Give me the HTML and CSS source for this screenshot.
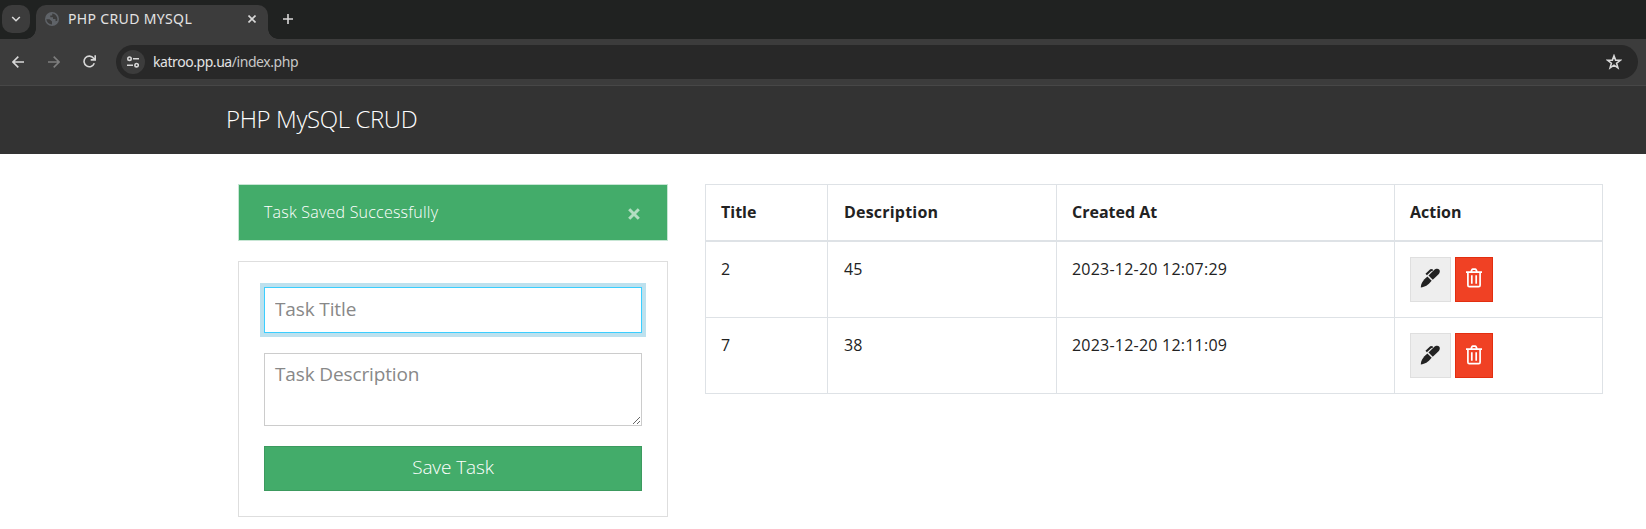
FILE: index.html
```html
<!DOCTYPE html>
<html lang="en">
<head>
<meta charset="utf-8">
<title>PHP CRUD MYSQL</title>
<link rel="stylesheet" href="styles.css">
</head>
<body>
<svg class="defs" width="0" height="0">
  <symbol id="pen" viewBox="0 0 20 20">
    <path d="M.8 19.4C1 15.200 2.700 12.600 7.400 8.500L11.700 12.800C7.800 17.400 5 19.100.8 19.400Z"/>
    <path d="M8.500 7.500 13.800 2.300C16.200.1 18.400.7 19.300 1.700C20.300 3.100 19.800 5 18.300 6.600L12.800 11.800Z"/>
    <path d="M6.200 6.500 10.700 2.200 12.700 2" fill="none" stroke="currentColor" stroke-width="2.100"/>
  </symbol>
  <symbol id="trash" viewBox="0 0 18 20">
    <path d="M1 4.200H17M6 3.900 7 1.700Q7.200 1.200 7.800 1.200H10.200Q10.800 1.200 11 1.700L12 3.900M2.900 4.500V17.200Q2.900 18.700 4.300 18.700H13.700Q15.100 18.700 15.100 17.200V4.500" fill="none" stroke="currentColor" stroke-width="1.700"/>
    <path d="M6.800 7.200V15.800M11.200 7.200V15.800" stroke="currentColor" stroke-width="1.700"/>
  </symbol>
</svg>
<div class="tabstrip">
  <div class="tab-search"><svg width="10" height="6" viewBox="0 0 10 6"><path d="M1.200 1 5 4.700 8.800 1"/></svg></div>
  <div class="tab">
    <svg class="globe" width="14" height="14" viewBox="0 0 14 14"><circle cx="7" cy="7" r="7" fill="#5f6368"/><path d="M1.300 7.200H4.500L7 9.400V12.500C4 12.300 1.700 10.200 1.300 7.200ZM7.200 1.400V3.500H5.300V5.300H8V7H10.500V9.300L12.200 8.800C13 5.300 10.800 1.600 7.200 1.400Z" fill="#3c3c3c"/></svg>
    <span class="tab-title">PHP CRUD MYSQL</span>
    <svg class="tab-close" width="8" height="8" viewBox="0 0 8 8"><path d="M.5.5 7.500 7.500M7.500.5.5 7.500"/></svg>
  </div>
  <svg class="new-tab" width="10" height="10" viewBox="0 0 10 10"><path d="M5 0V10M0 5H10"/></svg>
</div>
<div class="toolbar">
  <svg class="back" width="12" height="12" viewBox="0 0 12 12"><path d="M12 6H1M6.300.6.900 6 6.300 11.400"/></svg>
  <svg class="forward" width="12" height="12" viewBox="0 0 12 12"><path d="M0 6H11M5.700.6 11.100 6 5.700 11.400"/></svg>
  <svg class="reload" width="13" height="13" viewBox="0 0 13 13"><path d="M11.300 8.300A5.300 5.300 0 1 1 10.600 3.200L12 4.700M12.200.3V4.900H7.700"/></svg>
  <div class="omnibox">
    <div class="site-info"><svg width="12" height="12" viewBox="0 0 12 12"><circle cx="2.500" cy="2.700" r="1.700"/><path d="M6 2.700H12M0 9.200H6"/><circle cx="9.600" cy="9.200" r="1.700"/></svg></div>
    <span class="url">katroo.pp.ua<span class="path">/index.php</span></span>
    <svg class="star" width="16" height="16" viewBox="0 0 16 16"><path d="M8 1.800 9.600 6.100 14.300 6.300 10.600 9.200 11.900 13.900 8 11.200 4.100 13.900 5.400 9.200 1.700 6.300 6.400 6.100Z"/></svg>
  </div>
</div>
<nav class="navbar"><a class="brand">PHP MySQL CRUD</a></nav>
<main class="content">
  <section class="left">
    <div class="alert"><span>Task Saved Successfully</span><svg class="alert-close" width="12" height="12" viewBox="0 0 12 12"><path d="M1.200 1.200 10.800 10.800M10.800 1.200 1.200 10.800"/></svg></div>
    <form class="card">
      <input class="field focused" type="text" placeholder="Task Title">
      <textarea class="field area" placeholder="Task Description"></textarea>
      <button class="save" type="button">Save Task</button>
    </form>
  </section>
  <table class="tasks">
    <colgroup><col class="c-title"><col class="c-desc"><col class="c-date"><col class="c-action"></colgroup>
    <thead><tr><th>Title</th><th>Description</th><th>Created At</th><th>Action</th></tr></thead>
    <tbody>
      <tr><td>2</td><td>45</td><td>2023-12-20 12:07:29</td><td><div class="actions"><a class="btn edit"><svg width="20" height="20"><use href="#pen"/></svg></a><a class="btn delete"><svg width="18" height="20"><use href="#trash"/></svg></a></div></td></tr>
      <tr><td>7</td><td>38</td><td>2023-12-20 12:11:09</td><td><div class="actions"><a class="btn edit"><svg width="20" height="20"><use href="#pen"/></svg></a><a class="btn delete"><svg width="18" height="20"><use href="#trash"/></svg></a></div></td></tr>
    </tbody>
  </table>
</main>
</body>
</html>
```
FILE: styles.css
```css
* { box-sizing: border-box; }
body { margin: 0; background: #fff; color: #222; font: 400 16px/24px "Open Sans", sans-serif; overflow: hidden; }
svg { display: block; flex: none; }
.defs { position: absolute; }
.tabstrip { display: flex; align-items: flex-start; height: 39px; padding: 5px 0 0 2px; background: #202221; }
.tab-search { width: 28px; height: 28px; margin-right: 6px; border-radius: 10px; background: #3c3c3c; display: flex; align-items: center; justify-content: center; }
.tabstrip path, .toolbar path, .toolbar circle { fill: none; stroke: #d8d8d8; stroke-width: 1.6; }
.tabstrip .globe path { fill: #3c3c3c; stroke: none; }
.tab { position: relative; width: 232px; height: 34px; padding: 0 12px 6px 9px; border-radius: 10px 10px 0 0; background: #3c3c3c; display: flex; align-items: center; }
.tab::before, .tab::after { content: ""; position: absolute; bottom: 0; width: 10px; height: 10px; }
.tab::before { left: -10px; background: radial-gradient(circle at 0 0, transparent 9.500px, #3c3c3c 10px); }
.tab::after { right: -10px; background: radial-gradient(circle at 100% 0, transparent 9.500px, #3c3c3c 10px); }
.tab-title { flex: 1; margin-left: 9px; color: #e3e3e3; font: 14px/20px "Noto Sans", sans-serif; letter-spacing: .35px; white-space: nowrap; }
.new-tab { margin: 9px 0 0 15px; }
.toolbar { display: flex; align-items: center; height: 47px; padding: 0 8px 1px 12px; background: #3c3c3c; border-bottom: 1px solid #474747; }
.forward { margin-left: 24px; }
.toolbar .forward path { stroke: #7e7e7e; }
.reload { margin-left: 23px; }
.omnibox { flex: 1; height: 34px; margin-left: 20px; padding: 0 16px 0 5px; border-radius: 17px; background: #282828; display: flex; align-items: center; }
.site-info { width: 24px; height: 24px; border-radius: 50%; background: #3c3c3c; display: flex; align-items: center; justify-content: center; }
.url { flex: 1; margin-left: 8px; color: #e3e3e3; font: 14px/20px "Noto Sans", sans-serif; letter-spacing: -.44px; }
.path { color: #c7c7c7; }
.navbar { height: 68px; padding: 18px 0 0 226px; background: #333; }
.brand { display: block; color: #fff; font-size: 24px; line-height: 30px; font-weight: 300; letter-spacing: -.38px; }
.content { display: flex; align-items: flex-start; gap: 37px; padding: 30px 43px 0 238px; }
.left { width: 430px; }
.alert { height: 57px; margin-bottom: 20px; padding: 0 27px 2px 25px; border: 1px solid #c7e6d4; background: #43ac6a; color: #fff; font-weight: 300; letter-spacing: .22px; display: flex; align-items: center; justify-content: space-between; }
.alert-close { margin-top: 4px; }
.alert-close path { stroke: #b4dec3; stroke-width: 3; }
.card { display: flex; flex-direction: column; gap: 20px; height: 256px; padding: 25px; border: 1px solid #dedede; }
.field { display: block; width: 100%; height: 46px; margin: 0; padding: 7px 10px 9px; border: 1px solid #ccc; border-radius: 0; outline: 0; background: #fff; font: 400 19px/27px "Open Sans", sans-serif; letter-spacing: -.13px; }
.field::placeholder { color: #888; opacity: 1; }
.focused { border-color: #3bceff; box-shadow: 0 0 0 4px #bde1ee; }
.area { height: 73px; resize: vertical; }
.save { height: 45px; padding: 0 0 4px; border: 1px solid #3c9a5f; background: #43ac6a; color: #fff; font: 300 19px/28px "Open Sans", sans-serif; letter-spacing: -.1px; }
.tasks { width: 898px; table-layout: fixed; border-collapse: collapse; border: 1px solid #dee2e6; }
.c-title { width: 122px; }
.c-desc { width: 229px; }
.c-date { width: 338px; }
.tasks th, .tasks td { padding: 15px; border: 1px solid #dee2e6; text-align: left; vertical-align: top; }
.tasks th:nth-child(2), .tasks td:nth-child(2) { padding-left: 16px; }
.tasks th { height: 56px; font-weight: 700; border-bottom-width: 2px; }
.tasks th:nth-child(2) { letter-spacing: .2px; }
.tasks td { height: 76px; letter-spacing: .22px; }
.actions { display: flex; gap: 4px; }
.btn { height: 45px; padding-bottom: 2px; border: 1px solid; display: flex; align-items: center; justify-content: center; }
.tasks tr:last-child .btn { padding-bottom: 0; }
.btn svg { fill: currentColor; }
.edit { width: 41px; padding-right: 1px; background: #eee; border-color: #dfdfdf; color: #222; }
.delete { width: 38px; background: #f04124; border-color: #e22e10; color: #fff; }
```
